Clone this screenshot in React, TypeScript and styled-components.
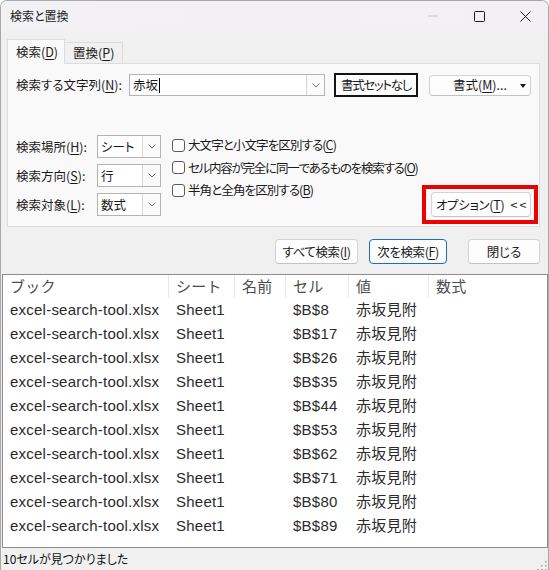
import React from "react";
import styled, { createGlobalStyle } from "styled-components";

const UI = `"Noto Sans CJK JP", "Noto Sans", sans-serif`;
const LIST = `"Liberation Sans", "Noto Sans CJK JP", sans-serif`;

const Global = createGlobalStyle`
  html, body { margin: 0; padding: 0; background: #ffffff; }
  * { box-sizing: border-box; }
  u { text-underline-offset: 2px; text-decoration-thickness: 1px; }
`;

const Window = styled.div`
  width: 549px;
  height: 570px;
  display: flex;
  flex-direction: column;
  background: #f0f0f0;
  border: 1px solid #a9a9a9;
  border-bottom: none;
  border-radius: 7px 7px 0 0;
  overflow: hidden;
  font-family: ${UI};
  font-feature-settings: "palt";
  color: #1a1a1a;
`;

const TitleBar = styled.div`
  height: 30px;
  flex: none;
  display: flex;
  align-items: center;
  padding-left: 9px;
  background: linear-gradient(90deg, #f2f1f4 0%, #f4eff5 100%);
`;

const Title = styled.div`
  flex: 1;
  font-size: 12px;
  line-height: 16px;
  color: #1c1c1c;
`;

const Controls = styled.div`
  display: flex;
  height: 30px;
`;

const CtrlButton = styled.div`
  width: 46px;
  height: 30px;
  display: flex;
  align-items: center;
  justify-content: center;
`;

const Body = styled.div`
  flex: none;
  display: flex;
  flex-direction: column;
  padding: 8px 8px 0 6px;
`;

const Tabs = styled.div`
  display: flex;
  align-items: flex-end;
  height: 24px;
`;

const Tab = styled.div<{ $active?: boolean }>`
  position: relative;
  z-index: ${(p) => (p.$active ? 1 : 0)};
  width: 58px;
  height: ${(p) => (p.$active ? "25px" : "21px")};
  margin-bottom: ${(p) => (p.$active ? "-1px" : "0")};
  padding: ${(p) => (p.$active ? "3px 0 0 8px" : "1px 0 0 8px")};
  background: ${(p) => (p.$active ? "#f9f9f9" : "#f0f0f0")};
  border: 1px solid #dcdcdc;
  border-bottom: none;
  border-left: ${(p) => (p.$active ? "1px solid #dcdcdc" : "none")};
  font-size: 12.5px;
  line-height: 17px;
  color: #1a1a1a;
`;

const Panel = styled.div`
  height: 164px;
  display: flex;
  flex-direction: column;
  padding: 9px 8px 0 8px;
  background: #f9f9f9;
  border: 1px solid #dcdcdc;
`;

const SearchRow = styled.div`
  display: flex;
  align-items: center;
  height: 24px;
`;

const Label = styled.div<{ $w: number }>`
  width: ${(p) => p.$w}px;
  flex: none;
  font-size: 12.5px;
  line-height: 16px;
  color: #1a1a1a;
  white-space: nowrap;
`;

const Combo = styled.div<{ $w: number; $h: number }>`
  width: ${(p) => p.$w}px;
  height: ${(p) => p.$h}px;
  flex: none;
  display: flex;
  background: #ffffff;
  border: 1px solid #b4b4b4;
`;

const ComboText = styled.div`
  flex: 1;
  display: flex;
  align-items: center;
  padding-left: 3px;
  font-size: 12.5px;
  line-height: 16px;
  color: #1a1a1a;
`;

const Caret = styled.span`
  display: inline-block;
  width: 1px;
  height: 15px;
  margin-left: 1px;
  background: #000;
`;

const DropBtn = styled.div`
  width: 18px;
  flex: none;
  display: flex;
  align-items: center;
  justify-content: center;
  background: #fbfbfb;
  border-left: 1px solid #d6d6d6;
`;

const Button = styled.div<{
  $w: number;
  $h: number;
  $variant?: "default" | "dark" | "blue";
  $spacing?: number;
}>`
  width: ${(p) => p.$w}px;
  height: ${(p) => p.$h}px;
  flex: none;
  display: flex;
  align-items: center;
  justify-content: center;
  gap: 6px;
  background: #fdfdfd;
  border: ${(p) =>
    p.$variant === "dark"
      ? "2px solid #141414"
      : p.$variant === "blue"
      ? "1px solid #1a6fc4"
      : "1px solid #d3d3d3"};
  border-bottom-color: ${(p) =>
    p.$variant === "dark" ? "#141414" : p.$variant === "blue" ? "#1a6fc4" : "#c2c2c2"};
  border-radius: ${(p) => (p.$variant === "dark" ? "0" : "4px")};
  font-size: 12.5px;
  line-height: 16px;
  letter-spacing: ${(p) => p.$spacing ?? 0}px;
  color: #1a1a1a;
  white-space: nowrap;
`;

const Spacer = styled.div<{ $w: number }>`
  width: ${(p) => p.$w}px;
  flex: none;
`;

const FormatBtn = styled(Button)`
  position: relative;
`;

const Arrow = styled.span`
  position: absolute;
  right: 4px;
  top: 8px;
  width: 0;
  height: 0;
  border-left: 3.5px solid transparent;
  border-right: 3.5px solid transparent;
  border-top: 4px solid #1a1a1a;
`;

const OptionsArea = styled.div`
  flex: 1;
  display: flex;
  margin-top: 37px;
`;

const FieldCol = styled.div`
  display: flex;
  flex-direction: column;
  gap: 6px;
  padding-top: 1px;
`;

const FieldRow = styled.div`
  display: flex;
  align-items: center;
  height: 23px;
`;

const CheckCol = styled.div`
  display: flex;
  flex-direction: column;
  margin-left: 11px;
`;

const CheckRow = styled.div<{ $spacing?: number }>`
  display: flex;
  align-items: center;
  gap: 3px;
  height: 22.5px;
  font-size: 12.5px;
  line-height: 16px;
  letter-spacing: ${(p) => p.$spacing ?? -0.9}px;
  color: #1a1a1a;
  white-space: nowrap;
`;

const Box = styled.span`
  width: 13px;
  height: 13px;
  flex: none;
  background: #ffffff;
  border: 1px solid #5c5c5c;
  border-radius: 3px;
`;

const OptionCol = styled.div`
  margin-left: auto;
  margin-right: -7px;
  margin-bottom: 2px;
  align-self: flex-end;
`;

const Highlight = styled.div`
  border: 4px solid #ee0000;
  padding: 3px 3px 3px 5px;
`;

const ActionRow = styled.div`
  display: flex;
  justify-content: flex-end;
  margin-top: 12px;
  height: 25px;
`;

const ResultList = styled.div`
  flex: 1;
  margin: 10px 0 0 1px;
  background: #ffffff;
  border: 1px solid #8c8c8c;
  font-family: ${LIST};
  font-feature-settings: normal;
  font-size: 15px;
  letter-spacing: 0.23px;
  overflow: hidden;
`;

const Row = styled.div<{ $header?: boolean }>`
  display: grid;
  grid-template-columns: 166px 66px 51px 63px 80px 1fr;
  height: ${(p) => (p.$header ? "23px" : "24px")};
  color: ${(p) => (p.$header ? "#4d4d4d" : "#2b2b2b")};
`;

const Cell = styled.div<{ $sep?: boolean }>`
  display: flex;
  align-items: center;
  padding-left: 7px;
  white-space: nowrap;
  overflow: hidden;
  line-height: 18px;
  border-right: ${(p) => (p.$sep ? "1px solid #e6e6e6" : "none")};
`;

const StatusBar = styled.div`
  height: 22px;
  flex: none;
  display: flex;
  align-items: center;
  padding-left: 2px;
  font-size: 12px;
  line-height: 16px;
  color: #111;
  font-feature-settings: "palt";
`;

const StatusText = styled.div`
  flex: 1;
`;

const Grip = styled.div`
  align-self: flex-end;
  width: 11px;
  height: 11px;
  margin-bottom: 1px;
  margin-right: 1px;
`;

const Chevron = () => (
  <svg width="8" height="5" viewBox="0 0 8 5">
    <polyline points="0.5,0.5 4,4 7.5,0.5" fill="none" stroke="#6a6a6a" strokeWidth="1" />
  </svg>
);

const headers = ["ブック", "シート", "名前", "セル", "値", "数式"];
const cells = [8, 17, 26, 35, 44, 53, 62, 71, 80, 89];

export default function App() {
  return (
    <>
      <Global />
      <Window>
        <TitleBar>
          <Title>検索と置換</Title>
          <Controls>
            <CtrlButton>
              <svg width="10" height="2" viewBox="0 0 10 2">
                <line x1="0" y1="1" x2="10" y2="1" stroke="#c4c4c4" strokeWidth="1" />
              </svg>
            </CtrlButton>
            <CtrlButton>
              <svg width="11" height="11" viewBox="0 0 11 11">
                <rect x="0.5" y="0.5" width="10" height="10" rx="1" fill="none" stroke="#1a1a1a" strokeWidth="1" />
              </svg>
            </CtrlButton>
            <CtrlButton>
              <svg width="11" height="11" viewBox="0 0 11 11">
                <path d="M0.5 0.5 L10.5 10.5 M10.5 0.5 L0.5 10.5" stroke="#1a1a1a" strokeWidth="1" />
              </svg>
            </CtrlButton>
          </Controls>
        </TitleBar>
        <Body>
          <Tabs>
            <Tab $active>
              検索(<u>D</u>)
            </Tab>
            <Tab>
              置換(<u>P</u>)
            </Tab>
          </Tabs>
          <Panel>
            <SearchRow>
              <Label $w={113}>
                検索する文字列(<u>N</u>):
              </Label>
              <Combo $w={196} $h={22}>
                <ComboText>
                  赤坂
                  <Caret />
                </ComboText>
                <DropBtn>
                  <Chevron />
                </DropBtn>
              </Combo>
              <Spacer $w={9} />
              <Button $w={84} $h={24} $variant="dark" $spacing={-1.3}>
                <span>書式セットなし</span>
              </Button>
              <Spacer $w={11} />
              <FormatBtn $w={102} $h={21}>
                <span>
                  書式(<u>M</u>)...
                </span>
                <Arrow />
              </FormatBtn>
            </SearchRow>
            <OptionsArea>
              <FieldCol>
                <FieldRow>
                  <Label $w={81}>
                    検索場所(<u>H</u>):
                  </Label>
                  <Combo $w={64} $h={23}>
                    <ComboText>シート</ComboText>
                    <DropBtn>
                      <Chevron />
                    </DropBtn>
                  </Combo>
                </FieldRow>
                <FieldRow>
                  <Label $w={81}>
                    検索方向(<u>S</u>):
                  </Label>
                  <Combo $w={64} $h={23}>
                    <ComboText>行</ComboText>
                    <DropBtn>
                      <Chevron />
                    </DropBtn>
                  </Combo>
                </FieldRow>
                <FieldRow>
                  <Label $w={81}>
                    検索対象(<u>L</u>):
                  </Label>
                  <Combo $w={64} $h={23}>
                    <ComboText>数式</ComboText>
                    <DropBtn>
                      <Chevron />
                    </DropBtn>
                  </Combo>
                </FieldRow>
              </FieldCol>
              <CheckCol>
                <CheckRow>
                  <Box />
                  <span>
                    大文字と小文字を区別する(<u>C</u>)
                  </span>
                </CheckRow>
                <CheckRow $spacing={-1.25}>
                  <Box />
                  <span>
                    セル内容が完全に同一であるものを検索する(<u>O</u>)
                  </span>
                </CheckRow>
                <CheckRow>
                  <Box />
                  <span>
                    半角と全角を区別する(<u>B</u>)
                  </span>
                </CheckRow>
              </CheckCol>
              <OptionCol>
                <Highlight>
                  <Button $w={100} $h={25} $spacing={-0.3}>
                    <span>
                      オプション(<u>T</u>)
                    </span>
                    <span>&lt;&nbsp;&lt;</span>
                  </Button>
                </Highlight>
              </OptionCol>
            </OptionsArea>
          </Panel>
          <ActionRow>
            <Button $w={83} $h={25} $spacing={-0.4}>
              <span>
                すべて検索(<u>I</u>)
              </span>
            </Button>
            <Spacer $w={11} />
            <Button $w={78} $h={25} $variant="blue" $spacing={-0.4}>
              <span>
                次を検索(<u>F</u>)
              </span>
            </Button>
            <Spacer $w={21} />
            <Button $w={72} $h={25}>
              <span>閉じる</span>
            </Button>
          </ActionRow>
        </Body>
        <ResultList>
          <Row $header>
            {headers.map((h, i) => (
              <Cell key={h} $sep={i < headers.length - 1}>
                {h}
              </Cell>
            ))}
          </Row>
          {cells.map((n) => (
            <Row key={n}>
              <Cell>excel-search-tool.xlsx</Cell>
              <Cell>Sheet1</Cell>
              <Cell></Cell>
              <Cell>$B${n}</Cell>
              <Cell>赤坂見附</Cell>
              <Cell></Cell>
            </Row>
          ))}
        </ResultList>
        <StatusBar>
          <StatusText>10セルが見つかりました</StatusText>
          <Grip>
            <svg width="11" height="11" viewBox="0 0 11 11">
              {[
                [9, 1],
                [9, 5],
                [5, 5],
                [9, 9],
                [5, 9],
                [1, 9],
              ].map(([x, y]) => (
                <rect key={`${x}-${y}`} x={x} y={y} width="1.5" height="1.5" fill="#9a9a9a" />
              ))}
            </svg>
          </Grip>
        </StatusBar>
      </Window>
    </>
  );
}
